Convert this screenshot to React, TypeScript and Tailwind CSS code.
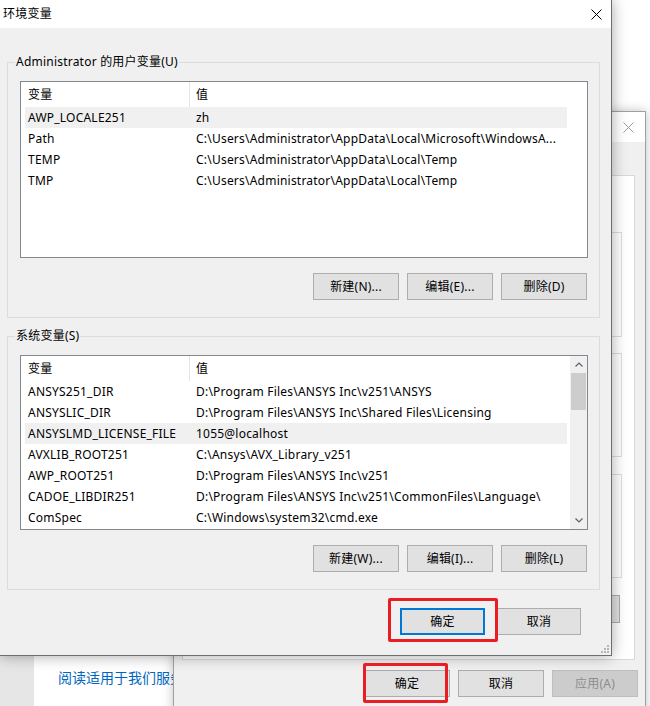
import React from 'react'

type Row = [string, string]

const userVars: Row[] = [
  ['AWP_LOCALE251', 'zh'],
  ['Path', 'C:\\Users\\Administrator\\AppData\\Local\\Microsoft\\WindowsA...'],
  ['TEMP', 'C:\\Users\\Administrator\\AppData\\Local\\Temp'],
  ['TMP', 'C:\\Users\\Administrator\\AppData\\Local\\Temp'],
]

const systemVars: Row[] = [
  ['ANSYS251_DIR', 'D:\\Program Files\\ANSYS Inc\\v251\\ANSYS'],
  ['ANSYSLIC_DIR', 'D:\\Program Files\\ANSYS Inc\\Shared Files\\Licensing'],
  ['ANSYSLMD_LICENSE_FILE', '1055@localhost'],
  ['AVXLIB_ROOT251', 'C:\\Ansys\\AVX_Library_v251'],
  ['AWP_ROOT251', 'D:\\Program Files\\ANSYS Inc\\v251'],
  ['CADOE_LIBDIR251', 'D:\\Program Files\\ANSYS Inc\\v251\\CommonFiles\\Language\\'],
  ['ComSpec', 'C:\\Windows\\system32\\cmd.exe'],
]

function CloseIcon({ color = '#000' }: { color?: string }) {
  return (
    <svg width="11" height="11" viewBox="0 0 11 11">
      <path d="M0.5 0.5L10.5 10.5M10.5 0.5L0.5 10.5" stroke={color} strokeWidth="1" />
    </svg>
  )
}

function Button({ label, focused, disabled, w = 'w-[86px]' }: { label: string; focused?: boolean; disabled?: boolean; w?: string }) {
  return (
    <div
      className={`${w} h-[27px] flex items-center justify-center text-[12px] ${
        disabled
          ? 'bg-[#cccccc] border border-[#bfbfbf] text-[#8c8c8c]'
          : focused
          ? 'bg-[#e1e1e1] border-2 border-[#0078d7] text-black'
          : 'bg-[#e1e1e1] border border-[#adadad] text-black'
      }`}
    >
      {label}
    </div>
  )
}

function Scrollbar() {
  return (
    <div className="w-[17px] bg-[#f0f0f0] flex flex-col">
      <div className="h-[17px] flex items-center justify-center">
        <svg width="8" height="5" viewBox="0 0 8 5">
          <path d="M0.5 4.5L4 1L7.5 4.5" stroke="#606060" fill="none" strokeWidth="1.2" />
        </svg>
      </div>
      <div className="mx-[1px] h-[37px] bg-[#cdcdcd]" />
      <div className="flex-1" />
      <div className="h-[17px] flex items-center justify-center">
        <svg width="8" height="5" viewBox="0 0 8 5">
          <path d="M0.5 0.5L4 4L7.5 0.5" stroke="#606060" fill="none" strokeWidth="1.2" />
        </svg>
      </div>
    </div>
  )
}

function ListView({ rows, selected, h, scroll }: { rows: Row[]; selected: number; h: string; scroll?: boolean }) {
  return (
    <div className={`${h} w-[568px] flex border border-[#828790] bg-white`}>
      <div className="flex-1 overflow-hidden">
        <div className="h-[25px] flex items-stretch">
          <div className="w-[169px] pl-[7px] flex items-center border-r border-[#e5e5e5]">变量</div>
          <div className="pl-[6px] flex items-center">值</div>
        </div>
        {rows.map(([name, value], i) => (
          <div
            key={name}
            className={`ml-[4px] w-[542px] h-[21px] flex items-center whitespace-nowrap ${i === selected ? 'bg-[#f0f0f0]' : ''}`}
          >
            <div className="w-[171px] pl-[3px] overflow-hidden">{name}</div>
            <div className="flex-1 overflow-hidden">{value}</div>
          </div>
        ))}
      </div>
      {scroll && <Scrollbar />}
    </div>
  )
}

function GroupBox({ label, children }: { label: string; children: React.ReactNode }) {
  return (
    <div className="relative w-[593px] border border-[#dcdcdc] pl-[12px] pt-[18px] pb-[17px]">
      <span className="absolute -top-[9px] left-[7px] px-[1px] bg-[#f0f0f0] leading-[16px]">{label}</span>
      {children}
    </div>
  )
}

function ButtonRow({ labels }: { labels: string[] }) {
  return (
    <div className="mt-[15px] w-[567px] flex justify-end gap-[8px]">
      {labels.map(l => (
        <Button key={l} label={l} />
      ))}
    </div>
  )
}

export default function App() {
  return (
    <div className="relative w-[650px] h-[706px] overflow-hidden bg-white text-[12px] tracking-[0.22px] text-black font-['Noto_Sans','Noto_Sans_CJK_SC',sans-serif]">
      {/* settings window behind everything */}
      <div className="absolute inset-0 flex">
        <div className="w-[34px] bg-[#e6e6e6]" />
        <div className="flex-1 flex flex-col justify-end pl-[24px] pb-[18px]">
          <span className="text-[14px] tracking-normal text-[#0067c0] whitespace-nowrap">阅读适用于我们服务的 Microsoft 服务协议</span>
        </div>
      </div>

      {/* system properties dialog */}
      <div className="absolute left-[173px] top-[111px] w-[473px] h-[620px] bg-[#f0f0f0] border border-[#a0a0a0] shadow-[0_0_10px_rgba(0,0,0,0.25)]">
        <div className="h-[30px] bg-white flex items-center justify-end pr-[11px]">
          <CloseIcon color="#9a9a9a" />
        </div>
        <div className="ml-[8px] mt-[33px] w-[453px] h-[485px] bg-white border border-[#d9d9d9] pt-[56px] flex flex-col items-end pr-[12px]">
          <div className="w-[430px] h-[105px] border border-[#dcdcdc]" />
          <div className="mt-[16px] w-[430px] h-[104px] border border-[#dcdcdc]" />
          <div className="mt-[17px] w-[430px] h-[104px] border border-[#dcdcdc]" />
          <div className="mt-[17px] mr-[2px] w-[120px] h-[28px] bg-[#e1e1e1] border border-[#adadad]" />
        </div>
        <div className="mt-[10px] flex justify-end gap-[8px] pr-[7px]">
          <Button label="确定" />
          <Button label="取消" />
          <Button label="应用(A)" disabled />
        </div>
      </div>

      {/* environment variables dialog */}
      <div className="absolute left-0 top-0 w-[612px] h-[656px] flex flex-col bg-[#f0f0f0] border-r border-b border-[#6e6e6e] shadow-[0_0_14px_rgba(0,0,0,0.35)]">
        <div className="h-[28px] bg-white flex items-center justify-between pl-[3px] pr-[9px]">
          <span>环境变量</span>
          <CloseIcon />
        </div>
        <div className="flex-1 pl-[7px] pt-[34px] relative">
          <GroupBox label="Administrator 的用户变量(U)">
            <ListView rows={userVars} selected={0} h="h-[177px]" />
            <ButtonRow labels={['新建(N)...', '编辑(E)...', '删除(D)']} />
          </GroupBox>
          <div className="mt-[18px]">
            <GroupBox label="系统变量(S)">
              <ListView rows={systemVars} selected={2} h="h-[175px]" scroll />
              <div className="mt-[2px]">
                <ButtonRow labels={['新建(W)...', '编辑(I)...', '删除(L)']} />
              </div>
            </GroupBox>
          </div>
          <div className="mt-[18px] w-[574px] flex justify-end gap-[12px]">
            <Button label="确定" focused w="w-[85px]" />
            <Button label="取消" w="w-[84px]" />
          </div>
          <svg className="absolute right-[2px] bottom-[2px]" width="9" height="9" viewBox="0 0 9 9">
            <g fill="#b5b5b5">
              <rect x="7" y="1" width="2" height="2" />
              <rect x="4" y="4" width="2" height="2" />
              <rect x="7" y="4" width="2" height="2" />
              <rect x="1" y="7" width="2" height="2" />
              <rect x="4" y="7" width="2" height="2" />
              <rect x="7" y="7" width="2" height="2" />
            </g>
          </svg>
        </div>
      </div>

      {/* red highlight marks */}
      <div className="absolute left-[388px] top-[598px] w-[110px] h-[44px] border-[3px] border-[#ea1c24] rounded-[2px]" />
      <div className="absolute left-[363px] top-[663px] w-[85px] h-[40px] border-[3px] border-[#ea1c24] rounded-[2px]" />
    </div>
  )
}
